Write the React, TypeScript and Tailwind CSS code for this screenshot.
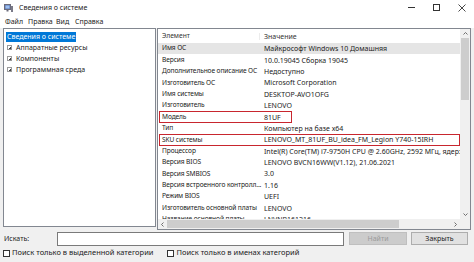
export default function App() {
  const rows: [string, string][] = [
    ["Имя ОС", "Майкрософт Windows 10 Домашняя"],
    ["Версия", "10.0.19045 Сборка 19045"],
    ["Дополнительное описание ОС", "Недоступно"],
    ["Изготовитель ОС", "Microsoft Corporation"],
    ["Имя системы", "DESKTOP-AVO1OFG"],
    ["Изготовитель", "LENOVO"],
    ["Модель", "81UF"],
    ["Тип", "Компьютер на базе x64"],
    ["SKU системы", "LENOVO_MT_81UF_BU_idea_FM_Legion Y740-15IRH"],
    ["Процессор", "Intel(R) Core(TM) i7-9750H CPU @ 2.60GHz, 2592 МГц, ядер: 6"],
    ["Версия BIOS", "LENOVO BVCN16WW(V1.12), 21.06.2021"],
    ["Версия SMBIOS", "3.0"],
    ["Версия встроенного контролл...", "1.16"],
    ["Режим BIOS", "UEFI"],
    ["Изготовитель основной платы", "LENOVO"],
    ["Название основной платы", "LNVNB161216"],
  ];

  return (
    <div className="flex h-[262px] w-[474px] flex-col overflow-hidden bg-[#f0f0f0] font-['Noto_Sans',sans-serif] text-[7px] leading-none text-[#1b1b1b]">
      {/* title bar */}
      <div className="flex h-[15px] items-center bg-white pl-[4px]">
        <svg width="9" height="8" viewBox="0 0 9 8">
          <rect x="0.5" y="0.5" width="6" height="5" fill="#5a78b8" stroke="#6b6b7b" />
          <rect x="1.5" y="1.5" width="4" height="3" fill="#9ec0ef" />
          <rect x="2.5" y="6" width="2" height="1.5" fill="#6b6b7b" />
          <rect x="7" y="2" width="2" height="6" fill="#7a7a88" />
        </svg>
        <span className="ml-[6px]">Сведения о системе</span>
        <div className="ml-auto flex h-full items-center">
          <div className="flex w-[25px] justify-center">
            <span className="block h-px w-[7px] bg-[#333]" />
          </div>
          <div className="flex w-[25px] justify-center">
            <span className="block h-[7px] w-[7px] border border-[#333]" />
          </div>
          <div className="flex w-[25px] justify-center">
            <svg width="8" height="8" viewBox="0 0 8 8" stroke="#333" strokeWidth="0.9">
              <path d="M0.5 0.5 7.5 7.5M7.5 0.5 0.5 7.5" />
            </svg>
          </div>
        </div>
      </div>

      {/* menu */}
      <div className="flex h-[13px] items-center bg-white pl-[5px]">
        <span className="w-[23px]">Файл</span>
        <span className="w-[28px]">Правка</span>
        <span className="w-[19px]">Вид</span>
        <span>Справка</span>
      </div>

      {/* panes */}
      <div className="flex items-start gap-[1px] px-[3px]">
        <div className="h-[199px] w-[154px] border border-[#828790] bg-white pt-[2px]">
          <div className="flex h-[11px] items-center pl-[2px]">
            <span className="bg-[#0078d7] px-[1px] py-[1.5px] text-white">Сведения о системе</span>
          </div>
          {["Аппаратные ресурсы", "Компоненты", "Программная среда"].map((t) => (
            <div key={t} className="flex h-[11px] items-center pl-[3px]">
              <span className="relative mr-[4px] block h-[5px] w-[5px] border-[0.5px] border-[#9a9a9a]">
                <span className="absolute left-[1px] top-[1.75px] block h-[0.5px] w-[2px] bg-[#444]" />
                <span className="absolute left-[1.75px] top-[1px] block h-[2px] w-[0.5px] bg-[#444]" />
              </span>
              <span>{t}</span>
            </div>
          ))}
        </div>

        <div className="flex h-[202px] w-[314px] flex-col border border-[#828790] bg-white">
          <div className="flex h-[190px]">
            <div className="relative w-[302px] overflow-hidden">
              <div className="grid h-[14px] grid-cols-[101px_1fr] items-center text-[#333]">
                <span className="pl-[4px] text-[6.7px]">Элемент</span>
                <span className="border-l border-[#ececec] pl-[4px]">Значение</span>
              </div>
              {rows.map(([k, v], i) => (
                <div
                  key={k}
                  className={`relative grid h-[11.4px] grid-cols-[101px_1fr] items-center whitespace-nowrap ${
                    i === 0 ? "bg-[#e5e5e5]" : ""
                  }`}
                >
                  <span className="pl-[4px] text-[6.6px] tracking-[-0.1px]">{k}</span>
                  <span className="pl-[5px]">{v}</span>
                  {k === "Модель" && (
                    <span className="absolute left-[1px] top-0 h-[12px] w-[133px] border-[1.5px] border-[#c8262e]" />
                  )}
                  {k === "SKU системы" && (
                    <span className="absolute left-[1px] top-0 h-[12px] w-[301px] border-[1.5px] border-[#c8262e]" />
                  )}
                </div>
              ))}
            </div>
            {/* vertical scrollbar */}
            <div className="flex w-[10px] flex-col bg-[#f0f0f0]">
              <div className="flex h-[9px] items-center justify-center">
                <svg width="5" height="3" viewBox="0 0 5 3" fill="none" stroke="#606060" strokeWidth="0.9">
                  <path d="M0.5 2.5 2.5 0.5 4.5 2.5" />
                </svg>
              </div>
              <div className="mx-[1px] h-[62px] bg-[#cdcdcd]" />
              <div className="flex-1" />
              <div className="flex h-[9px] items-center justify-center">
                <svg width="5" height="3" viewBox="0 0 5 3" fill="none" stroke="#606060" strokeWidth="0.9">
                  <path d="M0.5 0.5 2.5 2.5 4.5 0.5" />
                </svg>
              </div>
            </div>
          </div>
          {/* horizontal scrollbar */}
          <div className="flex h-[10px]">
            <div className="flex w-[302px] items-center bg-[#f0f0f0]">
              <div className="flex w-[9px] justify-center">
                <svg width="3" height="5" viewBox="0 0 3 5" fill="none" stroke="#606060" strokeWidth="0.9">
                  <path d="M2.5 0.5 0.5 2.5 2.5 4.5" />
                </svg>
              </div>
              <div className="h-[8px] w-[232px] bg-[#cdcdcd]" />
              <div className="flex-1" />
              <div className="flex w-[9px] justify-center">
                <svg width="3" height="5" viewBox="0 0 3 5" fill="none" stroke="#606060" strokeWidth="0.9">
                  <path d="M0.5 0.5 2.5 2.5 0.5 4.5" />
                </svg>
              </div>
            </div>
            <div className="w-[10px] bg-[#f0f0f0]" />
          </div>
        </div>
      </div>

      {/* search row */}
      <div className="mt-[1px] flex h-[15px] items-center pl-[4px]">
        <span className="w-[53px]">Искать:</span>
        <div className="h-[14px] w-[287px] border border-[#7a7a7a] bg-white" />
        <button
          type="button"
          className="ml-[5px] h-[13px] w-[58px] border border-[#bfbfbf] bg-[#cccccc] text-[7px] leading-none text-[#9a9a9a]"
        >
          Найти
        </button>
        <button
          type="button"
          className="ml-[4px] h-[13px] w-[57px] border border-[#adadad] bg-[#e1e1e1] text-[7px] leading-none text-[#1b1b1b]"
        >
          Закрыть
        </button>
      </div>

      {/* checkboxes */}
      <div className="mt-[2px] flex h-[10px] items-center pl-[3px] text-[7.5px]">
        <span className="mr-[2px] block h-[7px] w-[7px] border border-[#333] bg-white" />
        <span>Поиск только в выделенной категории</span>
        <span className="ml-[14px] mr-[2px] block h-[7px] w-[7px] border border-[#333] bg-white" />
        <span>Поиск только в именах категорий</span>
      </div>
    </div>
  );
}
